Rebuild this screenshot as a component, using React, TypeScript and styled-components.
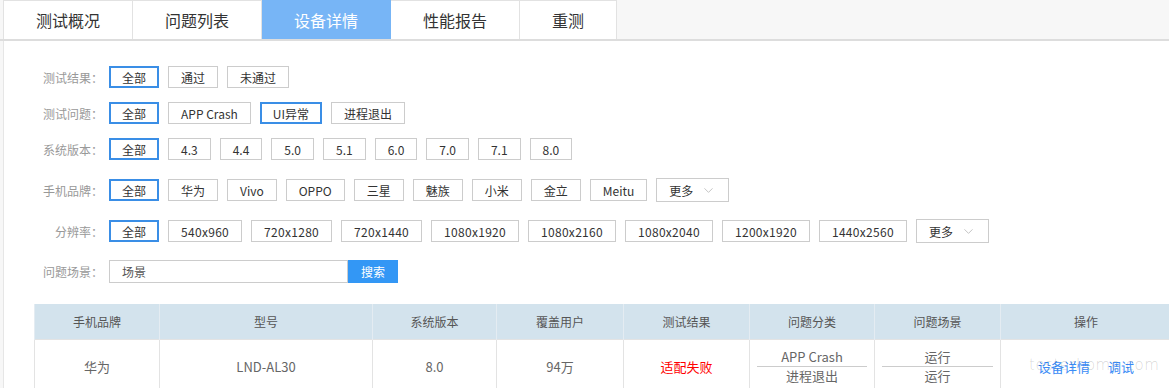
import styled, { createGlobalStyle } from 'styled-components';
import { ChevronDown } from 'lucide-react';

const GlobalStyle = createGlobalStyle`
  html, body {
    margin: 0;
    padding: 0;
    background: #f7f7f7;
    overflow: hidden;
  }
  body {
    font-family: "Noto Sans CJK SC", "Noto Sans", sans-serif;
    color: #333;
  }
`;

const TabBar = styled.div`
  display: flex;
  padding-left: 3px;
  border-bottom: 2px solid #dddddd;
  background: #f7f7f7;
`;

const Tab = styled.div<{ $active?: boolean }>`
  height: 39px;
  box-sizing: border-box;
  padding: 0 32px;
  display: flex;
  align-items: center;
  font-size: 16px;
  border-top: 1px solid #e2e2e2;
  border-right: 1px solid #e2e2e2;
  &:first-child {
    border-left: 1px solid #e2e2e2;
  }
  background: ${({ $active }) => ($active ? '#77b5f6' : '#ffffff')};
  color: ${({ $active }) => ($active ? '#ffffff' : '#333333')};
  ${({ $active }) => $active && 'border-color: #77b5f6;'}
`;

const Content = styled.div`
  margin-left: 3px;
  border-left: 1px solid #e6e6e6;
  background: #ffffff;
  padding-top: 25px;
  height: 400px;
`;

const FilterRow = styled.div<{ $top?: number }>`
  display: flex;
  align-items: center;
  margin-top: ${({ $top }) => $top || 0}px;
`;

const Label = styled.div`
  width: 99px;
  margin-right: 6px;
  text-align: right;
  font-size: 12px;
  color: #999999;
  white-space: nowrap;
`;

const Option = styled.div<{ $active?: boolean; $spread?: number }>`
  height: 22px;
  box-sizing: border-box;
  display: flex;
  align-items: center;
  margin-right: 9px;
  font-size: 12px;
  color: #333333;
  white-space: nowrap;
  letter-spacing: ${({ $spread }) => $spread || 0}px;
  border: ${({ $active }) => ($active ? '2px solid #3a8ee6' : '1px solid #cccccc')};
  padding: ${({ $active }) => ($active ? '0 11px' : '0 12px')};
`;

const MoreButton = styled.div`
  height: 24px;
  box-sizing: border-box;
  display: flex;
  align-items: center;
  gap: 8px;
  padding: 0 12px;
  font-size: 12px;
  color: #333333;
  border: 1px solid #cccccc;
`;

const SearchInput = styled.div`
  width: 239px;
  height: 23px;
  box-sizing: border-box;
  border: 1px solid #cccccc;
  display: flex;
  align-items: center;
  padding-left: 12px;
  font-size: 12px;
  color: #555555;
`;

const SearchButton = styled.div`
  width: 50px;
  height: 23px;
  background: #3397f5;
  color: #ffffff;
  font-size: 12px;
  display: flex;
  align-items: center;
  justify-content: center;
`;

const Table = styled.table`
  margin-top: 21px;
  margin-left: 30px;
  border-collapse: collapse;
  table-layout: fixed;
  width: 1137px;
`;

const Th = styled.th`
  height: 35px;
  padding: 0;
  background: #d3e3ed;
  color: #555555;
  font-size: 12px;
  font-weight: normal;
  border-right: 1px solid #e4ecf2;
  border-left: 1px solid #e4ecf2;
`;

const Td = styled.td`
  position: relative;
  height: 52px;
  padding: 0;
  text-align: center;
  font-size: 13px;
  color: #666666;
  border: 1px solid #e3e3e3;
  border-bottom: none;
`;

const Fail = styled.span`
  color: #ff0000;
`;

const Stack = styled.div`
  display: flex;
  flex-direction: column;
  margin: 0 7px;
`;

const StackLine = styled.div`
  line-height: 18px;
  &:first-child {
    border-bottom: 1px solid #cccccc;
  }
`;

const Link = styled.span`
  color: #3b8cf6;
  margin: 0 9px;
`;

const Watermark = styled.span`
  position: absolute;
  left: 28px;
  top: 16px;
  font-family: "DejaVu Sans", sans-serif;
  font-size: 15px;
  font-weight: 200;
  letter-spacing: 0.5px;
  color: rgba(0, 0, 0, 0.18);
  pointer-events: none;
  white-space: nowrap;
`;

type Filter = {
  label: string;
  options: string[];
  active: string[];
  more?: boolean;
  top: number;
  spread?: number;
};

const filters: Filter[] = [
  { label: '测试结果：', options: ['全部', '通过', '未通过'], active: ['全部'], top: 0 },
  { label: '测试问题：', options: ['全部', 'APP Crash', 'UI异常', '进程退出'], active: ['全部', 'UI异常'], top: 14 },
  { label: '系统版本：', options: ['全部', '4.3', '4.4', '5.0', '5.1', '6.0', '7.0', '7.1', '8.0'], active: ['全部'], top: 14 },
  {
    label: '手机品牌：',
    options: ['全部', '华为', 'Vivo', 'OPPO', '三星', '魅族', '小米', '金立', 'Meitu'],
    active: ['全部'],
    more: true,
    top: 18,
  },
  {
    label: '分辨率：',
    options: ['全部', '540x960', '720x1280', '720x1440', '1080x1920', '1080x2160', '1080x2040', '1200x1920', '1440x2560'],
    active: ['全部'],
    more: true,
    top: 17,
    spread: 0.3,
  },
];

const columns = [
  { title: '手机品牌', width: 125 },
  { title: '型号', width: 213 },
  { title: '系统版本', width: 124 },
  { title: '覆盖用户', width: 127 },
  { title: '测试结果', width: 126 },
  { title: '问题分类', width: 125 },
  { title: '问题场景', width: 126 },
  { title: '操作', width: 171 },
];

const tabs = ['测试概况', '问题列表', '设备详情', '性能报告', '重测'];

export default function App() {
  return (
    <>
      <GlobalStyle />
      <TabBar>
        {tabs.map((t) => (
          <Tab key={t} $active={t === '设备详情'}>
            {t}
          </Tab>
        ))}
      </TabBar>
      <Content>
        {filters.map((f) => (
          <FilterRow key={f.label} $top={f.top}>
            <Label>{f.label}</Label>
            {f.options.map((o) => (
              <Option key={o} $active={f.active.includes(o)} $spread={o === '全部' ? 0 : f.spread}>
                {o}
              </Option>
            ))}
            {f.more && (
              <MoreButton>
                更多
                <ChevronDown size={15} strokeWidth={1.2} color="#b0b0b0" />
              </MoreButton>
            )}
          </FilterRow>
        ))}
        <FilterRow $top={17}>
          <Label>问题场景：</Label>
          <SearchInput>场景</SearchInput>
          <SearchButton>搜索</SearchButton>
        </FilterRow>
        <Table>
          <colgroup>
            {columns.map((c) => (
              <col key={c.title} style={{ width: c.width }} />
            ))}
          </colgroup>
          <thead>
            <tr>
              {columns.map((c) => (
                <Th key={c.title}>{c.title}</Th>
              ))}
            </tr>
          </thead>
          <tbody>
            <tr>
              <Td>华为</Td>
              <Td>LND-AL30</Td>
              <Td>8.0</Td>
              <Td>94万</Td>
              <Td>
                <Fail>适配失败</Fail>
              </Td>
              <Td>
                <Stack>
                  <StackLine>APP Crash</StackLine>
                  <StackLine>进程退出</StackLine>
                </Stack>
              </Td>
              <Td>
                <Stack>
                  <StackLine>运行</StackLine>
                  <StackLine>运行</StackLine>
                </Stack>
              </Td>
              <Td>
                <Watermark>testerhome.com</Watermark>
                <Link>设备详情</Link>
                <Link>调试</Link>
              </Td>
            </tr>
          </tbody>
        </Table>
      </Content>
    </>
  );
}
